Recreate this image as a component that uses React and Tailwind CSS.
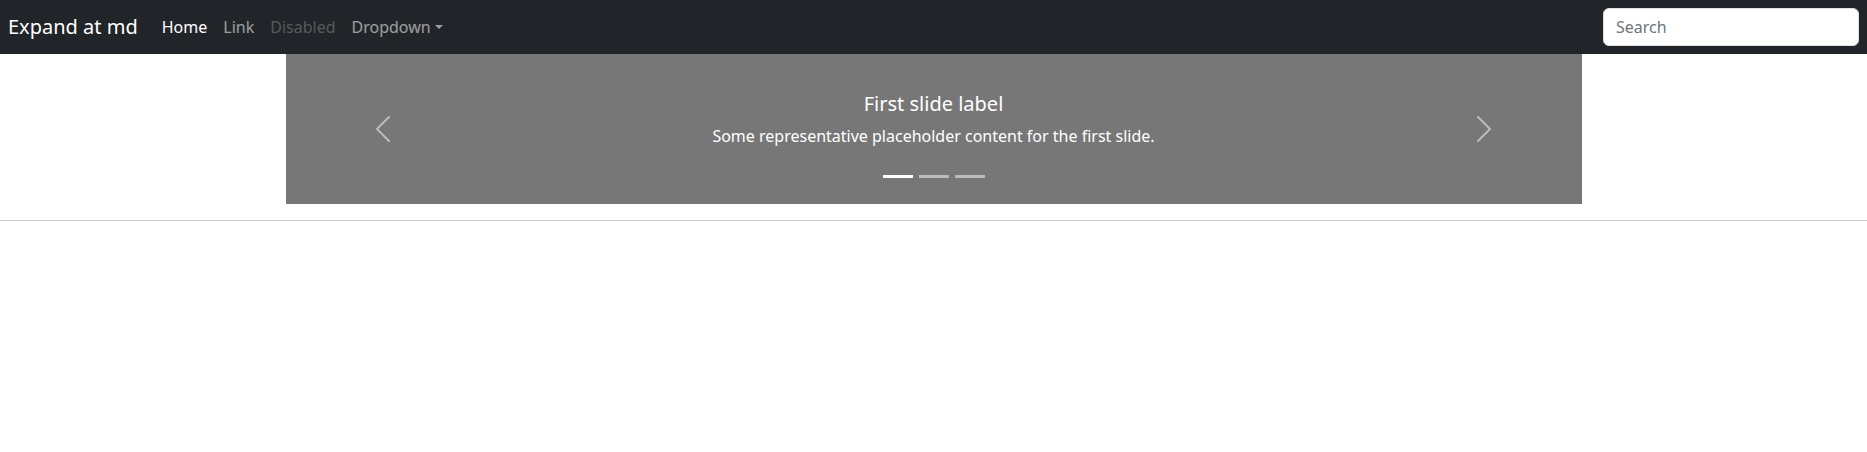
import React, { useState } from "react";

const slides = [
  { title: "First slide label", text: "Some representative placeholder content for the first slide." },
  { title: "Second slide label", text: "Some representative placeholder content for the second slide." },
  { title: "Third slide label", text: "Some representative placeholder content for the third slide." },
];

const Chevron = ({ dir }) => (
  <svg viewBox="0 0 16 16" className="h-8 w-8" fill="#fff">
    {dir === "prev" ? (
      <path d="M11.354 1.646a.5.5 0 0 1 0 .708L5.707 8l5.647 5.646a.5.5 0 0 1-.708.708l-6-6a.5.5 0 0 1 0-.708l6-6a.5.5 0 0 1 .708 0z" />
    ) : (
      <path d="M4.646 1.646a.5.5 0 0 1 .708 0l6 6a.5.5 0 0 1 0 .708l-6 6a.5.5 0 0 1-.708-.708L10.293 8 4.646 2.354a.5.5 0 0 1 0-.708z" />
    )}
  </svg>
);

export default function App() {
  const [active, setActive] = useState(0);
  const slide = slides[active];

  const go = (step) => setActive((i) => (i + step + slides.length) % slides.length);

  return (
    <div className="min-h-screen bg-white text-[#212529]" style={{ fontFamily: '"Noto Sans", "Liberation Sans", sans-serif' }}>
      <nav className="flex h-[54px] items-center justify-between bg-[#212529] px-2">
        <div className="flex items-center">
          <a href="#" className="mr-4 text-[20px] leading-[30px] text-white">Expand at md</a>
          <ul className="flex items-center text-base leading-6">
            <li><a href="#" className="block px-2 py-2 text-white">Home</a></li>
            <li><a href="#" className="block px-2 py-2 text-white/55">Link</a></li>
            <li><span className="block px-2 py-2 text-white/25">Disabled</span></li>
            <li>
              <a href="#" className="flex items-center px-2 py-2 text-white/55">
                Dropdown
                <span className="ml-[4px] h-0 w-0 border-x-[4.8px] border-t-[4.8px] border-x-transparent border-t-white/55" />
              </a>
            </li>
          </ul>
        </div>
        <input
          type="text"
          placeholder="Search"
          className="h-[38px] w-[256px] rounded-md border border-[#dee2e6] bg-white px-3 text-base text-[#212529] outline-none placeholder:text-[#6c757d]"
        />
      </nav>

      <div className="mx-auto w-[1296px]">
        <div className="relative h-[150px] bg-[#777]">
          <div className="absolute inset-x-[15%] bottom-5 py-5 text-center text-white">
            <h5 className="mb-2 text-[20px] leading-6 font-normal">{slide.title}</h5>
            <p className="mb-4 text-base leading-6">{slide.text}</p>
          </div>

          <div className="absolute inset-x-0 bottom-0 mb-4 flex justify-center">
            {slides.map((s, i) => (
              <button
                key={s.title}
                type="button"
                onClick={() => setActive(i)}
                className={`mx-[3px] box-content h-[3px] w-[30px] border-y-[10px] border-transparent bg-white bg-clip-padding ${i === active ? "opacity-100" : "opacity-50"}`}
              />
            ))}
          </div>

          <button type="button" onClick={() => go(-1)} className="absolute inset-y-0 left-0 flex w-[15%] items-center justify-center opacity-50">
            <Chevron dir="prev" />
          </button>
          <button type="button" onClick={() => go(1)} className="absolute inset-y-0 right-0 flex w-[15%] items-center justify-center opacity-50">
            <Chevron dir="next" />
          </button>
        </div>
      </div>

      <hr className="my-4 border-t border-[#c8c9ca]" />
    </div>
  );
}
